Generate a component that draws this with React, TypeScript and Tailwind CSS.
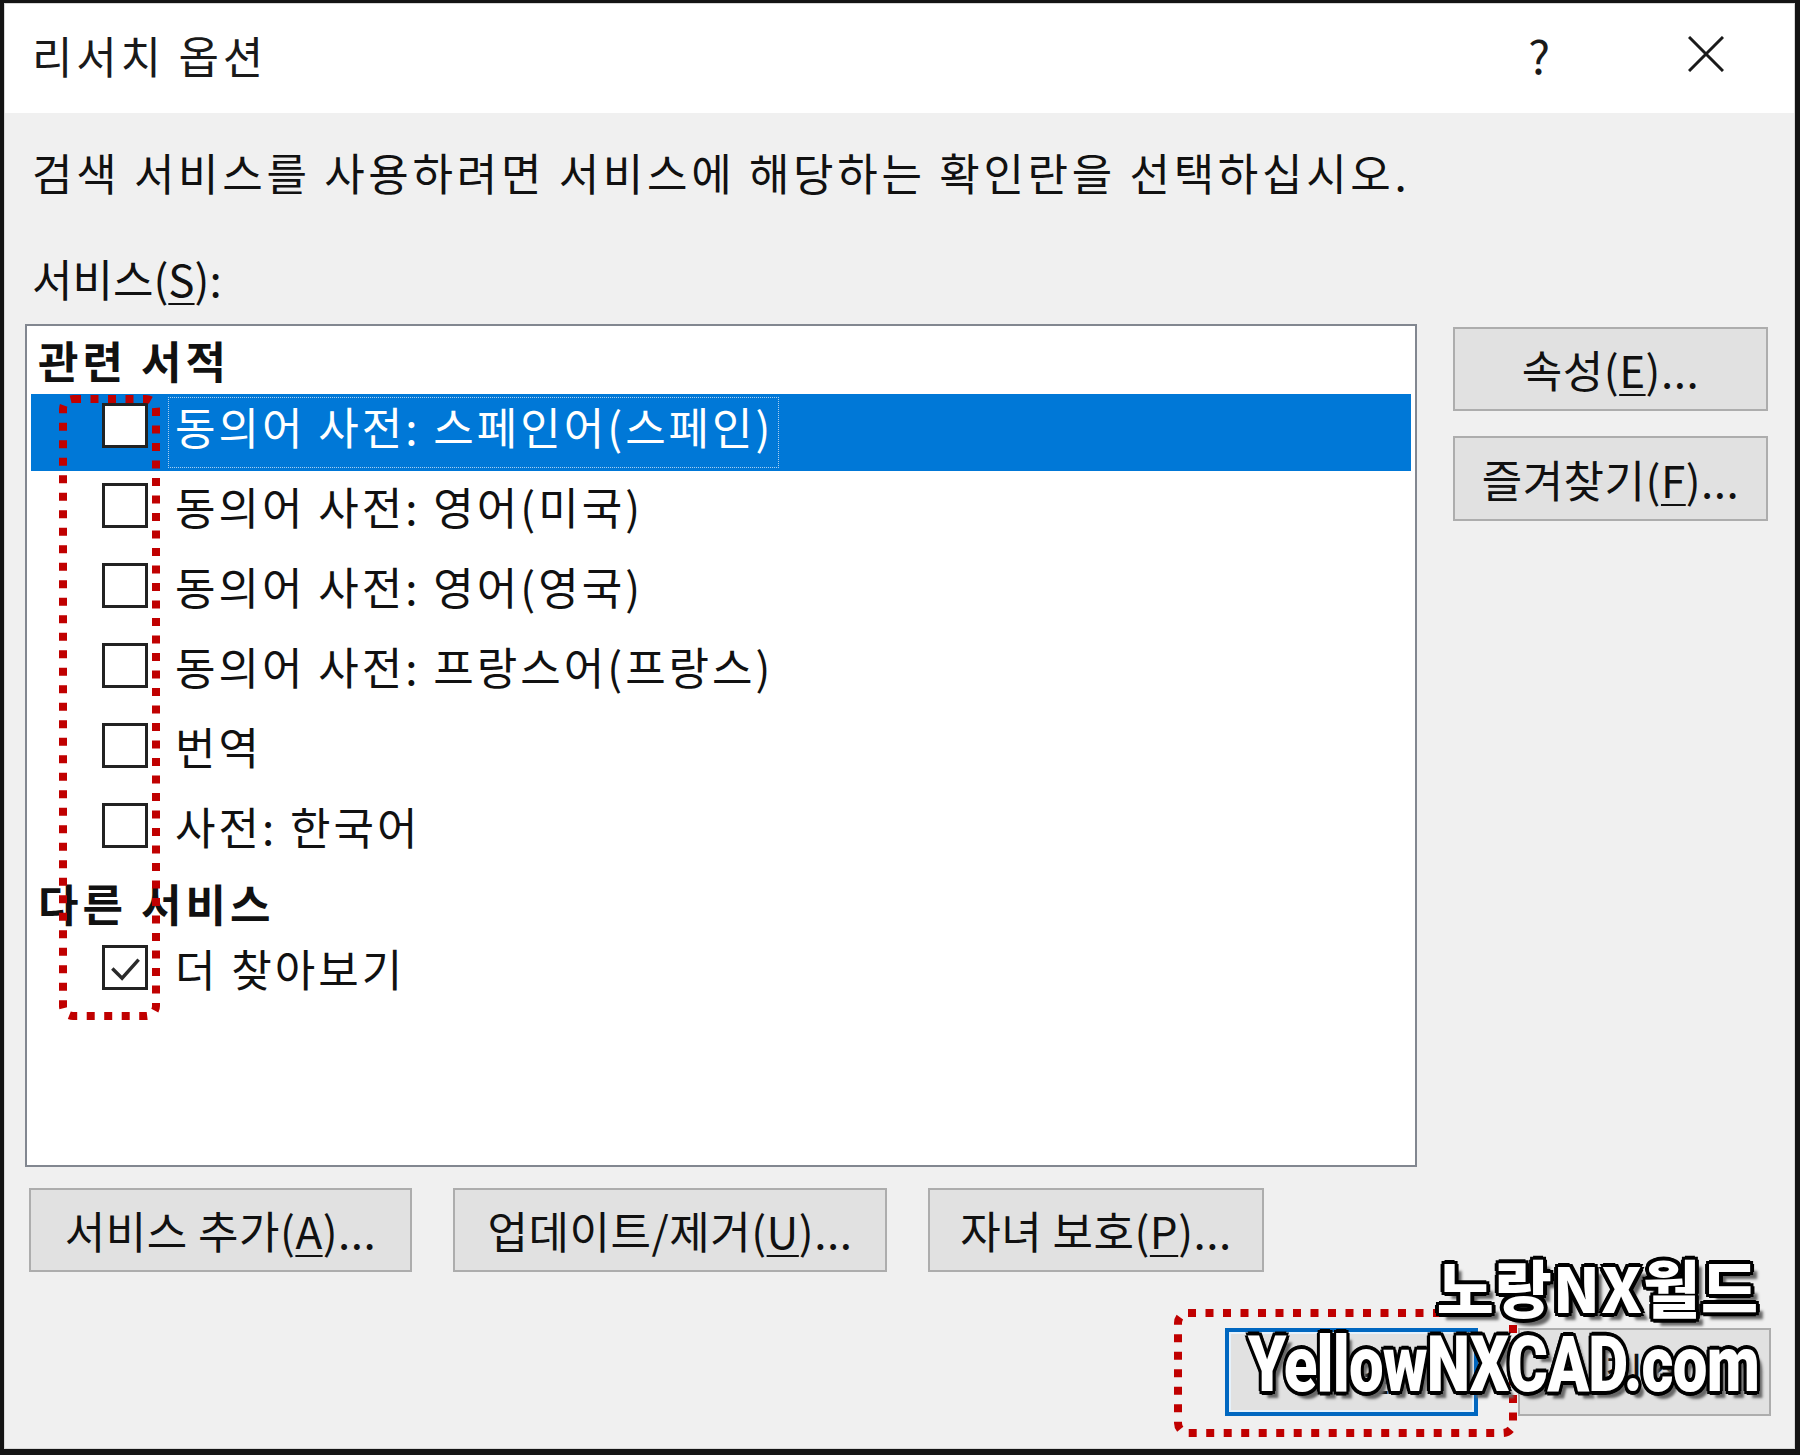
import React from "react";

function Box({ checked }: { checked?: boolean }) {
  return (
    <div className="w-[46px] h-[45px] border-[3px] border-[#222] bg-white flex items-center justify-center shrink-0">
      {checked && (
        <svg viewBox="0 0 40 40" className="w-[40px] h-[39px]">
          <path d="M7 21 L17 31 L34 12" fill="none" stroke="#2a2a2a" strokeWidth="3.5" />
        </svg>
      )}
    </div>
  );
}

function Item({ label, checked, selected }: { label: string; checked?: boolean; selected?: boolean }) {
  return (
    <div className="h-[80px] shrink-0">
      <div className={`mx-[4px] h-[77px] flex items-start ${selected ? "bg-[#0078d7]" : ""}`}>
        <div className="ml-[71px] mt-[9px]">
          <Box checked={checked} />
        </div>
        <div
          className={`ml-[20px] mt-[3px] h-[71px] pl-[7px] pr-[6px] pb-[14px] flex items-center whitespace-nowrap tracking-[3px] ${
            selected ? "text-white outline-1 outline-dotted outline-[#a9cdf0] -outline-offset-1" : "text-[#111]"
          }`}
        >
          <span className="leading-[52px]">{label}</span>
        </div>
      </div>
    </div>
  );
}

function Btn({ children, className = "" }: { children: React.ReactNode; className?: string }) {
  return (
    <div
      className={`bg-[#e1e1e1] border-2 border-[#adadad] flex items-center justify-center text-[44px] leading-[52px] text-[#111] whitespace-nowrap tracking-[0.5px] ${className}`}
    >
      {children}
    </div>
  );
}

const items = [
  "동의어 사전: 스페인어(스페인)",
  "동의어 사전: 영어(미국)",
  "동의어 사전: 영어(영국)",
  "동의어 사전: 프랑스어(프랑스)",
  "번역",
  "사전: 한국어",
];

export default function App() {
  return (
    <div className="relative w-[1800px] h-[1455px] bg-[#141414] pt-[3px] pl-[4px] pr-[5px] pb-[6px] font-['Noto_Sans_CJK_KR','Noto_Sans',sans-serif] overflow-hidden">
      <div className="w-full h-full flex flex-col border border-[#d8d8d8] bg-[#f0f0f0]">
        {/* Title bar */}
        <div className="h-[109px] shrink-0 bg-white flex items-center pl-[27px] pr-[70px]">
          <div className="text-[44px] leading-[52px] text-[#1a1a1a] -mt-[8px] tracking-[3.8px]">리서치 옵션</div>
          <div className="flex-1" />
          <div className="text-[46px] leading-[52px] text-[#1a1a1a] mr-[138px] -mt-[10px]">?</div>
          <svg viewBox="0 0 36 36" className="w-[36px] h-[36px] -mt-[10px]">
            <path d="M1 1 L35 35 M35 1 L1 35" stroke="#1a1a1a" strokeWidth="3" />
          </svg>
        </div>

        {/* Body */}
        <div className="flex-1 flex flex-col pl-[20px] pr-[26px]">
          <div className="mt-[33px] pl-[7px] text-[44px] leading-[52px] text-[#111] whitespace-nowrap tracking-[3.7px]">
            검색 서비스를 사용하려면 서비스에 해당하는 확인란을 선택하십시오.
          </div>
          <div className="mt-[54px] pl-[7px] text-[44px] leading-[52px] text-[#111]">
            서비스(<span className="underline underline-offset-[6px] decoration-2">S</span>):
          </div>

          <div className="mt-[20px] flex items-start">
            {/* list box */}
            <div className="w-[1392px] h-[843px] shrink-0 border-2 border-[#828790] bg-white flex flex-col text-[44px]">
              <div className="h-[68px] shrink-0 flex items-center pl-[11px] font-bold text-[#111] tracking-[4px]">
                <span className="leading-[52px]">관련 서적</span>
              </div>
              {items.map((t, i) => (
                <Item key={t} label={t} selected={i === 0} />
              ))}
              <div className="h-[62px] shrink-0 flex items-center pl-[11px] pb-[4px] font-bold text-[#111] tracking-[4px]">
                <span className="leading-[52px]">다른 서비스</span>
              </div>
              <Item label="더 찾아보기" checked />
            </div>

            {/* right buttons */}
            <div className="ml-[36px] w-[315px] flex flex-col gap-[25px] mt-[3px]">
              <Btn className="h-[84px]">
                속성(<span className="underline underline-offset-[6px] decoration-2">E</span>)...
              </Btn>
              <Btn className="h-[85px]">
                즐겨찾기(<span className="underline underline-offset-[6px] decoration-2">F</span>)...
              </Btn>
            </div>
          </div>

          <div className="mt-[21px] flex gap-[41px] pl-[4px]">
            <Btn className="w-[383px] h-[84px]">
              서비스 추가(<span className="underline underline-offset-[6px] decoration-2">A</span>)...
            </Btn>
            <Btn className="w-[434px] h-[84px]">
              업데이트/제거(<span className="underline underline-offset-[6px] decoration-2">U</span>)...
            </Btn>
            <Btn className="w-[336px] h-[84px]">
              자녀 보호(<span className="underline underline-offset-[6px] decoration-2">P</span>)...
            </Btn>
          </div>

          <div className="mt-[56px] flex justify-end gap-[40px] -mr-[3px]">
            <div className="w-[253px] h-[88px] border-[4px] border-[#0067c0] bg-[#e5f1fb] p-[2px]">
              <div className="w-full h-full bg-[#e1e1e1] flex items-center justify-center text-[44px] leading-[52px] text-[#111]">
                확인
              </div>
            </div>
            <Btn className="w-[253px] h-[88px]">취소</Btn>
          </div>
        </div>
      </div>

      {/* red dotted annotations */}
      <svg className="absolute inset-0 w-[1800px] h-[1455px] pointer-events-none" viewBox="0 0 1800 1455">
        <rect x="63" y="399" width="93" height="617" rx="10" fill="none" stroke="#c00000" strokeWidth="8" strokeDasharray="8 9.5" />
        <rect x="1178" y="1313" width="335" height="120" rx="10" fill="none" stroke="#c00000" strokeWidth="8" strokeDasharray="8 9.5" />
      </svg>

      {/* watermark */}
      <div className="absolute right-[41px] top-[1243px] flex flex-col items-end pointer-events-none">
        <div className="text-[62px] leading-[86px] font-black text-white font-['Noto_Sans_CJK_KR',sans-serif] tracking-[1px] [text-shadow:-3px_-3px_0_#000,3px_-3px_0_#000,-3px_3px_0_#000,3px_3px_0_#000,0_-4px_0_#000,0_4px_0_#000,-4px_0_0_#000,4px_0_0_#000,7px_7px_3px_#666]">
          노랑NX월드
        </div>
        <div className="origin-right scale-x-[0.79] -mt-[8px] text-[78px] leading-[88px] font-black text-white font-['Roboto',sans-serif] tracking-[-1px] [text-shadow:-3px_-3px_0_#000,3px_-3px_0_#000,-3px_3px_0_#000,3px_3px_0_#000,0_-4px_0_#000,0_4px_0_#000,-4px_0_0_#000,4px_0_0_#000,7px_7px_3px_#666]">
          YellowNXCAD.com
        </div>
      </div>
    </div>
  );
}
